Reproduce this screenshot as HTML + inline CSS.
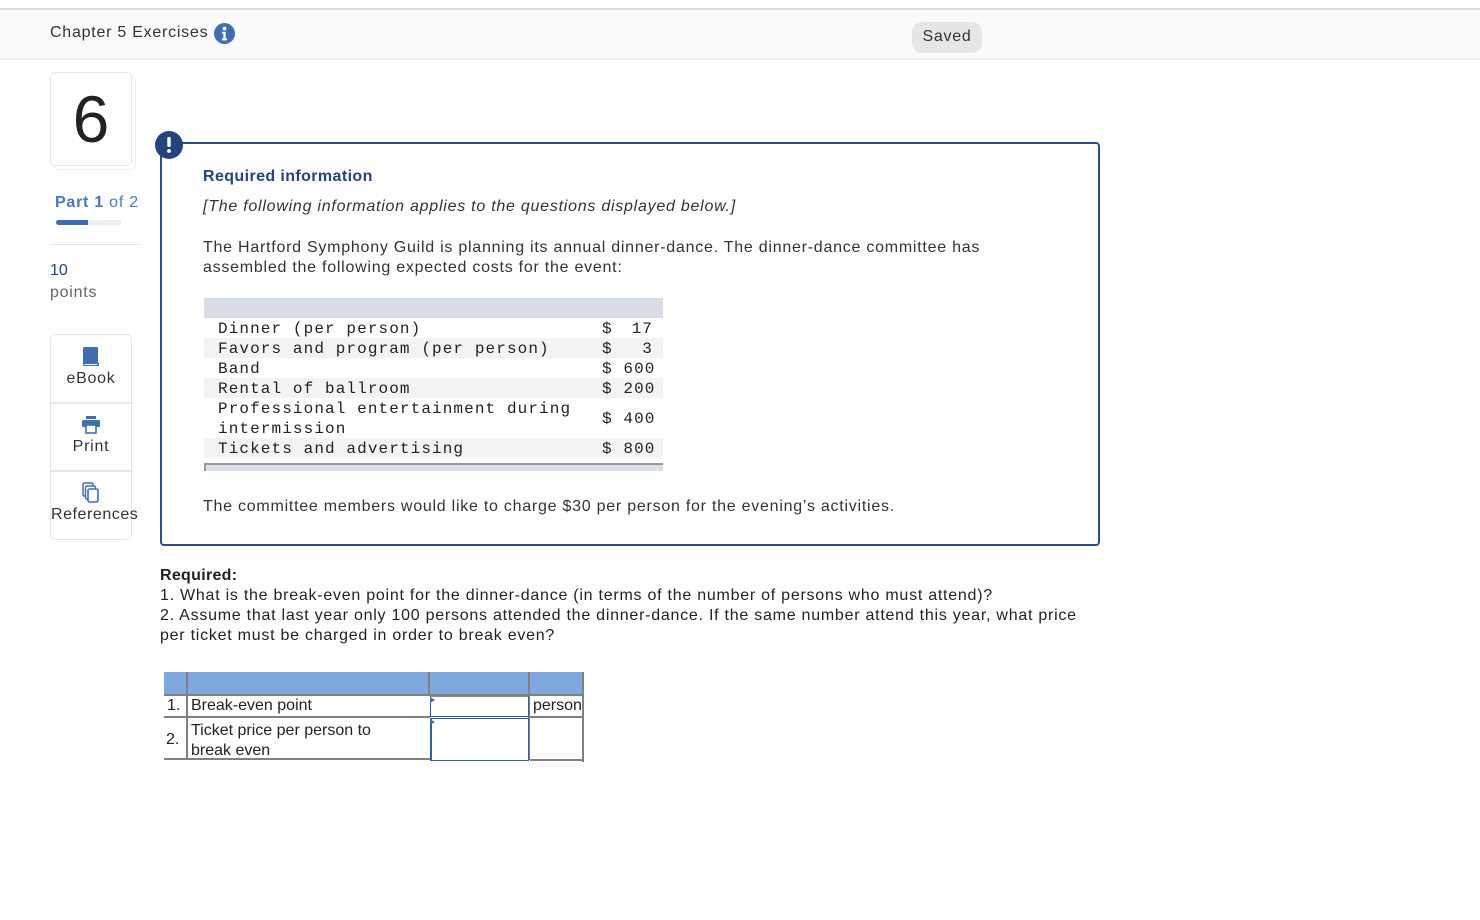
<!DOCTYPE html>
<html><head><meta charset="utf-8"><style>
*{margin:0;padding:0;box-sizing:border-box}
body{width:1480px;height:920px;background:#fff;font-family:"Liberation Sans",sans-serif;color:#333;position:relative;overflow:hidden}
.a{position:absolute;white-space:nowrap}
.p{letter-spacing:0.75px}
.mono{font-family:"Liberation Mono",monospace;font-size:16px;color:#222;letter-spacing:1.1px}
.row{position:absolute;left:204px;width:459px;height:20px}
.row span{position:absolute;top:2px}
</style></head><body>
<div class="a" style="left:0;top:8px;width:1480px;height:2px;background:#dcdcdf"></div>
<div class="a" style="left:0;top:10px;width:1480px;height:50px;background:#fafafa;border-bottom:2px solid #ececec"></div>
<div class="a p" style="left:50px;top:24px;font-size:16px;color:#333">Chapter 5 Exercises</div>
<svg class="a" style="left:214px;top:23px" width="21" height="21" viewBox="0 0 20 20"><circle cx="10" cy="10" r="10" fill="#3f6fb0"/><circle cx="10" cy="5.2" r="1.8" fill="#fff"/><path d="M7.5 8.3h3.6v6.5h1.4v1.7H7.5v-1.7h1.4V10H7.5z" fill="#fff"/></svg>
<div class="a p" style="left:912px;top:22px;width:70px;height:31px;background:#e6e5e8;border-radius:10px;font-size:16px;color:#333;text-align:center;line-height:30px">Saved</div>

<div class="a" style="left:54px;top:76px;width:82px;height:94px;border:1px solid #eee;border-radius:5px"></div>
<div class="a" style="left:50px;top:72px;width:82px;height:94px;border:1px solid #e6e6e6;border-radius:5px;background:#fff;font-size:66px;color:#222;text-align:center;line-height:92px">6</div>
<div class="a p" style="left:55px;top:194px;font-size:16px;color:#4a78bd"><b>Part 1</b> of 2</div>
<div class="a" style="left:56px;top:220px;width:66px;height:5px;border-radius:3px;background:#eee"></div>
<div class="a" style="left:56px;top:220px;width:32px;height:5px;border-radius:3px 0 0 3px;background:#3a6db5"></div>
<div class="a" style="left:50px;top:244px;width:90px;height:1px;background:#e6e6e6"></div>
<div class="a" style="left:50px;top:262px;font-size:16px;color:#23457c">10</div>
<div class="a p" style="left:50px;top:284px;font-size:16px;color:#666">points</div>

<div class="a" style="left:50px;top:334px;width:82px;height:206px;border:1px solid #e6e6e6;border-radius:5px"></div>
<div class="a" style="left:51px;top:402px;width:80px;height:2px;background:#e6e6e6"></div>
<div class="a" style="left:51px;top:470px;width:80px;height:2px;background:#e6e6e6"></div>
<svg class="a" style="left:82px;top:347px" width="18" height="20" viewBox="0 0 18 20"><rect x="1" y="0" width="15" height="17" rx="1.5" fill="#3f6fb0"/><path d="M1 16h16v3H2.5A1.5 1.5 0 0 1 1 17.5z" fill="#3f6fb0"/><rect x="2.5" y="17" width="13" height="1" fill="#fff"/></svg>
<div class="a p" style="left:51px;top:370px;width:80px;text-align:center;font-size:16px">eBook</div>
<svg class="a" style="left:81px;top:415px" width="20" height="20" viewBox="0 0 20 20"><rect x="5" y="1" width="10" height="3" fill="#3f6fb0"/><rect x="1" y="5" width="18" height="7" rx="1.5" fill="#3f6fb0"/><rect x="5" y="10" width="10" height="8" fill="#fff" stroke="#3f6fb0" stroke-width="1.6"/></svg>
<div class="a p" style="left:51px;top:438px;width:80px;text-align:center;font-size:16px">Print</div>
<svg class="a" style="left:82px;top:482px" width="18" height="22" viewBox="0 0 18 22"><rect x="1" y="1" width="10" height="13" rx="1.5" fill="#fff" stroke="#3f6fb0" stroke-width="1.5"/><rect x="3.5" y="4" width="10" height="13" rx="1.5" fill="#fff" stroke="#3f6fb0" stroke-width="1.5"/><rect x="6" y="7" width="10" height="13" rx="1.5" fill="#fff" stroke="#3f6fb0" stroke-width="1.6"/></svg>
<div class="a" style="left:51px;top:506px;font-size:16px;letter-spacing:0.55px">References</div>

<div class="a" style="left:160px;top:142px;width:940px;height:404px;border:2px solid #2b4f8a;border-radius:4px"></div>
<svg class="a" style="left:155px;top:131px" width="28" height="28" viewBox="0 0 28 28"><circle cx="14" cy="14" r="14" fill="#23457c"/><rect x="12.3" y="6" width="3.4" height="10" rx="1.2" fill="#fff"/><circle cx="14" cy="20" r="1.9" fill="#fff"/></svg>
<div class="a p" style="left:203px;top:168px;font-size:16px;font-weight:bold;color:#23457c;letter-spacing:0.4px">Required information</div>
<div class="a p" style="left:203px;top:198px;font-size:16px;font-style:italic;color:#333">[The following information applies to the questions displayed below.]</div>
<div class="a p" style="left:203px;top:238px;font-size:16px;line-height:20px;color:#333">The Hartford Symphony Guild is planning its annual dinner-dance. The dinner-dance committee has<br>assembled the following expected costs for the event:</div>

<div class="a" style="left:204px;top:298px;width:459px;height:20px;background:#d8dde6"></div>
<div class="row mono" style="top:318px"><span style="left:14px">Dinner (per person)</span><span style="left:398px">$</span><span style="right:10px">17</span></div>
<div class="row mono" style="top:338px;background:#f3f3f3"><span style="left:14px">Favors and program (per person)</span><span style="left:398px">$</span><span style="right:10px">3</span></div>
<div class="row mono" style="top:358px"><span style="left:14px">Band</span><span style="left:398px">$ 600</span></div>
<div class="row mono" style="top:378px;background:#f3f3f3"><span style="left:14px">Rental of ballroom</span><span style="left:398px">$ 200</span></div>
<div class="row mono" style="top:398px;height:40px"><span style="left:14px;line-height:20px;top:1px">Professional entertainment during<br>intermission</span><span style="left:398px;top:12px">$ 400</span></div>
<div class="row mono" style="top:438px;background:#f3f3f3"><span style="left:14px">Tickets and advertising</span><span style="left:398px">$ 800</span></div>
<div class="a" style="left:204px;top:463px;width:459px;height:8px;background:#d8dde6;border-top:2px solid #999;border-left:2px solid #999"></div>

<div class="a p" style="left:203px;top:498px;font-size:16px;color:#333">The committee members would like to charge $30 per person for the evening’s activities.</div>

<div class="a p" style="left:160px;top:566px;font-size:16px;line-height:20px;color:#222"><b style="letter-spacing:0.3px">Required:</b><br>1. What is the break-even point for the dinner-dance (in terms of the number of persons who must attend)?<br>2. Assume that last year only 100 persons attended the dinner-dance. If the same number attend this year, what price<br>per ticket must be charged in order to break even?</div>

<div class="a" style="left:164px;top:672px;width:420px;height:22px;background:#7fa9de"></div>
<div class="a" style="left:186px;top:672px;width:2px;height:88px;background:#808080"></div>
<div class="a" style="left:428px;top:672px;width:2px;height:24px;background:#808080"></div>
<div class="a" style="left:528px;top:672px;width:2px;height:88px;background:#808080"></div>
<div class="a" style="left:582px;top:672px;width:2px;height:90px;background:#808080"></div>
<div class="a" style="left:164px;top:694px;width:420px;height:2px;background:#808080"></div>
<div class="a" style="left:164px;top:716px;width:266px;height:2px;background:#808080"></div>
<div class="a" style="left:530px;top:716px;width:54px;height:2px;background:#808080"></div>
<div class="a" style="left:164px;top:758px;width:266px;height:2px;background:#808080"></div>
<div class="a" style="left:530px;top:759px;width:54px;height:2px;background:#808080"></div>
<div class="a" style="left:430px;top:696px;width:99px;height:21px;border:1px solid #2e5fa8;border-top:1px solid #888"></div>
<div class="a" style="left:430px;top:718px;width:99px;height:43px;border:1px solid #2e5fa8;border-left:2px solid #2e5fa8"></div>
<div class="a" style="left:430px;top:697px;width:0;height:0;border-top:3px solid transparent;border-bottom:3px solid transparent;border-left:5px solid #3a6fb5"></div>
<div class="a" style="left:430px;top:719px;width:0;height:0;border-top:3px solid transparent;border-bottom:3px solid transparent;border-left:5px solid #3a6fb5"></div>
<div class="a" style="left:167px;top:697px;font-size:16px;color:#222">1.</div>
<div class="a" style="left:191px;top:697px;font-size:16px;color:#222">Break-even point</div>
<div class="a" style="left:533px;top:697px;width:49px;overflow:hidden;font-size:16px;color:#222">person</div>
<div class="a" style="left:166px;top:731px;font-size:16px;color:#222">2.</div>
<div class="a" style="left:191px;top:721px;font-size:16px;line-height:20px;color:#222">Ticket price per person to<br>break even</div>
</body></html>
